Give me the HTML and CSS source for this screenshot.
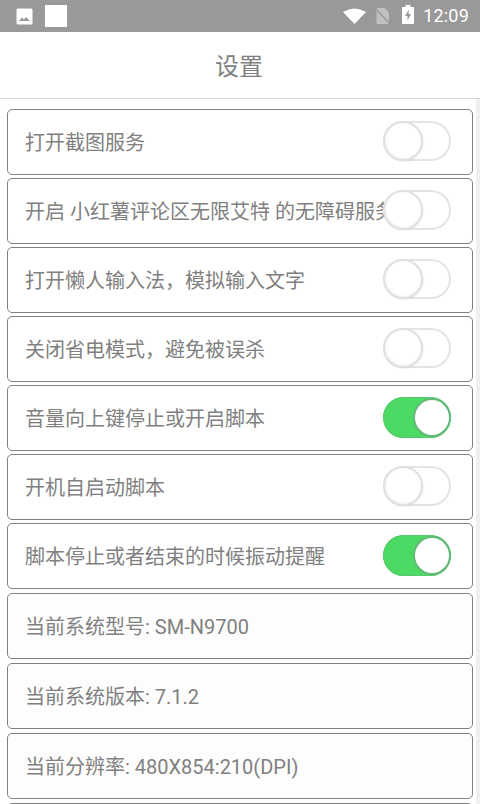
FILE: index.html
```html
<!DOCTYPE html>
<html lang="zh">
<head>
<meta charset="utf-8">
<title>设置</title>
<link rel="stylesheet" href="styles.css">
</head>
<body>
<div class="statusbar">
  <div class="status-left">
    <svg class="ic-image" viewBox="0 0 17 17"><rect x="0.5" y="0.5" width="16" height="16" rx="1.5" fill="#fff"/><path d="M3 13 L6 9.5 L7.8 11.5 L10 9 L14 13 Z" fill="#999"/></svg>
    <div class="white-square"></div>
  </div>
  <div class="status-right">
    <svg class="ic-wifi" viewBox="0 0 23 16"><path d="M0 4 Q11.500 -3 23 4 L11.500 16 Z" fill="#fff"/></svg>
    <svg class="ic-sim" viewBox="0 0 15 16"><path d="M1.500 0 H9.500 L14 4.500 V16 H1.500 Z" fill="#c0c0c0"/><path d="M0 0 L15 16" stroke="#999" stroke-width="1.500"/></svg>
    <svg class="ic-batt" viewBox="0 0 12 19"><path d="M3.500 0 H8.500 V2 H12 V19 H0 V2 H3.500 Z" fill="#fff"/><path d="M7 4.500 L3 11 H5.500 V15.500 L9 9 H6.500 Z" fill="#999"/></svg>
    <span class="clock">12:09</span>
  </div>
</div>
<header class="titlebar">设置</header>
<main class="content">
  <div class="list">
    <div class="row"><span class="label">打开截图服务</span><span class="switch"></span></div>
    <div class="row"><span class="label">开启 小红薯评论区无限艾特 的无障碍服务</span><span class="switch"></span></div>
    <div class="row"><span class="label">打开懒人输入法，模拟输入文字</span><span class="switch"></span></div>
    <div class="row"><span class="label">关闭省电模式，避免被误杀</span><span class="switch"></span></div>
    <div class="row"><span class="label">音量向上键停止或开启脚本</span><span class="switch on"></span></div>
    <div class="row"><span class="label">开机自启动脚本</span><span class="switch"></span></div>
    <div class="row"><span class="label">脚本停止或者结束的时候振动提醒</span><span class="switch on"></span></div>
    <div class="row info"><span class="label">当前系统型号: SM-N9700</span></div>
    <div class="row info"><span class="label">当前系统版本: 7.1.2</span></div>
    <div class="row info"><span class="label">当前分辨率: 480X854:210(DPI)</span></div>
    <div class="row info"></div>
  </div>
  <div class="scrollbar"></div>
</main>
</body>
</html>
```
FILE: styles.css
```css
*, *::before, *::after { box-sizing: border-box; }
html, body { margin: 0; padding: 0; height: 804px; overflow: hidden; background: #fff; }
body { font-family: Roboto, "Noto Sans CJK SC", sans-serif; color: #808080; display: flex; flex-direction: column; }

.statusbar { height: 32px; flex: none; background: #999; display: flex; justify-content: space-between; align-items: center; padding: 0 11px 0 16px; }
.status-left { display: flex; align-items: center; gap: 12px; }
.ic-image { width: 17px; height: 17px; display: block; }
.white-square { width: 22px; height: 22px; background: #fff; }
.status-right { display: flex; align-items: center; }
.ic-wifi { width: 23px; height: 16px; display: block; margin-right: 9px; }
.ic-sim { width: 15px; height: 16px; display: block; margin-right: 12px; }
.ic-batt { width: 12px; height: 19px; display: block; margin-right: 9px; margin-top: -3px; }
.clock { color: #fff; font-size: 18px; line-height: 32px; letter-spacing: 0.2px; }

.titlebar { height: 67px; flex: none; display: flex; align-items: center; justify-content: center; font-size: 24px; color: #808080; border-bottom: 1px solid #d4d4d4; padding: 0 2px 1px 0; }

.content { flex: 1; display: flex; min-height: 0; overflow: hidden; }
.list { flex: 1; padding: 10px 3px 0 7px; display: flex; flex-direction: column; gap: 3px; min-width: 0; }
.scrollbar { width: 4px; flex: none; background: #efefef; }

.row { height: 66px; flex: none; border: 1px solid #808080; border-radius: 5px; background: #fff; display: flex; align-items: center; padding: 2px 21px 0 17px; position: relative; overflow: hidden; }
.row.info { margin-top: 1px; background: #fdfdfd; }
.label { font-size: 20px; line-height: 28px; color: #808080; white-space: nowrap; }

.switch { position: absolute; right: 21px; top: 11px; width: 68px; height: 40px; border-radius: 20px; background: #fff; box-shadow: inset 0 0 0 2px #e4e4e4; }
.switch::after { content: ""; position: absolute; left: 0; top: 0; width: 40px; height: 40px; border-radius: 50%; background: #fff; border: 2px solid #e0e0e0; box-shadow: inset 1px -1px 2px rgba(0,0,0,.06), 1px 1px 1px rgba(0,0,0,.05); }
.switch.on { top: 11px; height: 41px; border-radius: 21px; background: #4cd964; box-shadow: inset 0 0 0 1px #58c86f; }
.switch.on::after { left: 30px; width: 38px; top: 1px; height: 39px; border: 2px solid #63b87a; box-shadow: none; }
```
